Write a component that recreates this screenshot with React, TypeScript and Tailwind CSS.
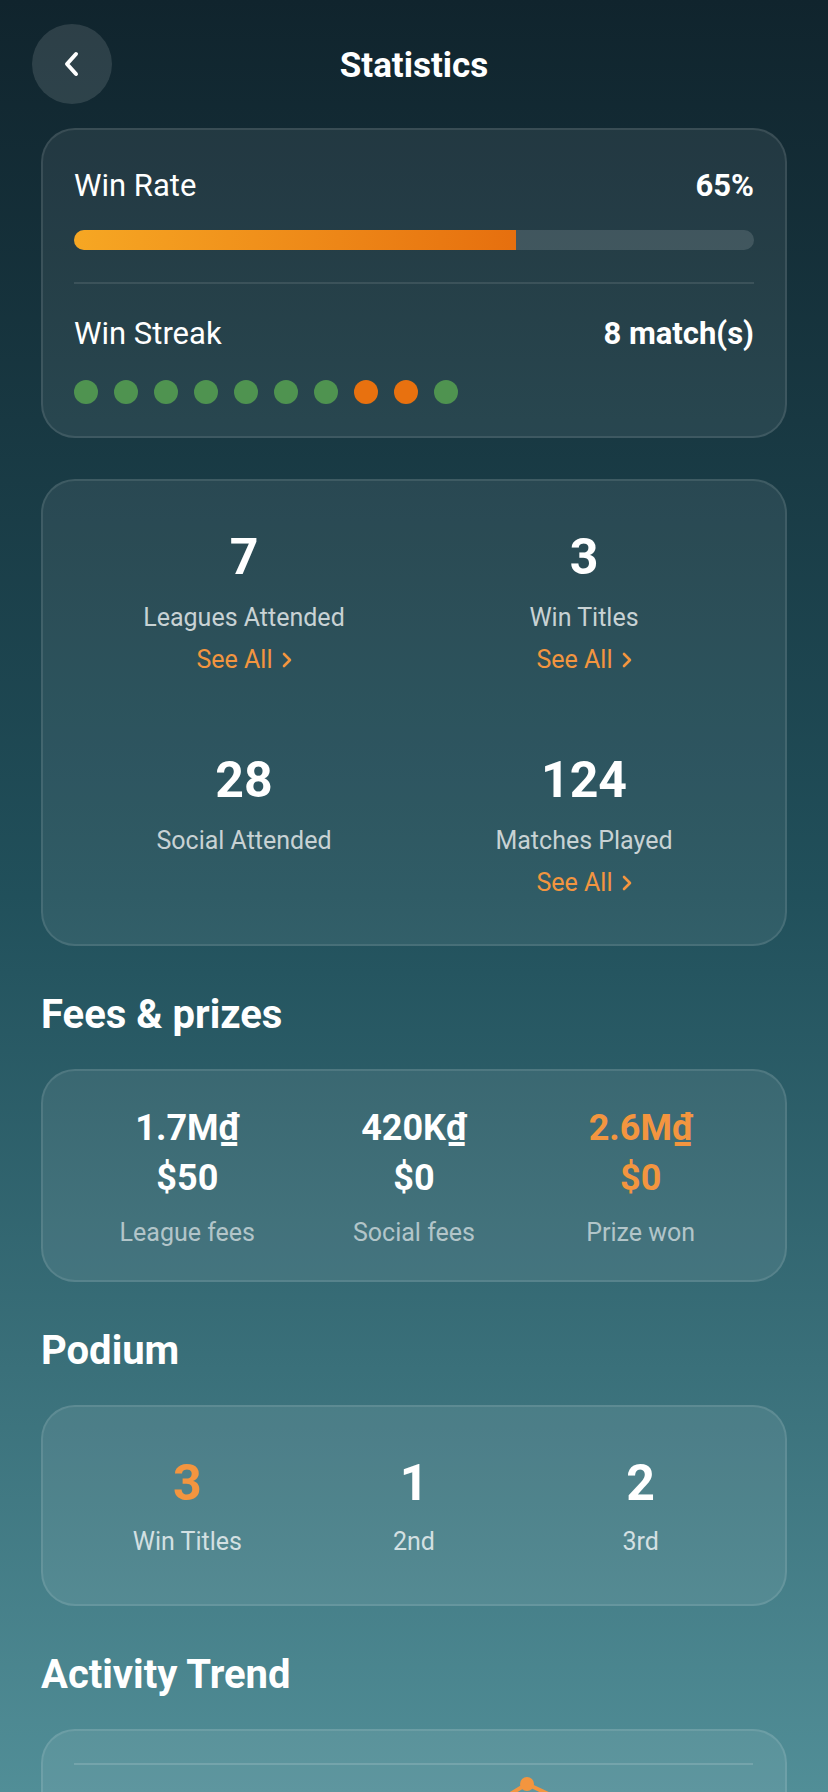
import React from 'react';

const streak = ['w', 'w', 'w', 'w', 'w', 'w', 'w', 'l', 'l', 'w'];

const SeeAll = () => (
  <button className="mt-3 flex items-center gap-[9px] text-[25px] leading-[30px] text-[#f3953f]">
    See All
    <svg width="10" height="16" viewBox="0 0 10 16" fill="none">
      <polyline points="2,2 8,8 2,14" stroke="#f3953f" strokeWidth="2.6" strokeLinecap="round" strokeLinejoin="round" />
    </svg>
  </button>
);

const Stat = ({ value, label, link }: { value: string; label: string; link?: boolean }) => (
  <div className="flex flex-col items-center">
    <div className="text-[50px] font-bold leading-[60px] text-white">{value}</div>
    <div className="mt-4 text-[25px] leading-[30px] text-[#c8d2d4]">{label}</div>
    {link && <SeeAll />}
  </div>
);

const Money = ({ top, bottom, label, accent }: { top: string; bottom: string; label: string; accent?: boolean }) => (
  <div className="flex flex-col items-center">
    <div className={`text-[36px] font-bold leading-[41px] ${accent ? 'text-[#f3953f]' : 'text-white'}`}>{top}</div>
    <div className={`mt-[9px] text-[36px] font-bold leading-[41px] ${accent ? 'text-[#f3953f]' : 'text-white'}`}>{bottom}</div>
    <div className="mt-[19px] text-[25px] leading-[30px] text-white/60">{label}</div>
  </div>
);

const Podium = ({ value, label, accent }: { value: string; label: string; accent?: boolean }) => (
  <div className="flex flex-col items-center">
    <div className={`text-[50px] font-bold leading-[60px] ${accent ? 'text-[#f3953f]' : 'text-white'}`}>{value}</div>
    <div className="mt-[14px] text-[25px] leading-[30px] text-white/75">{label}</div>
  </div>
);

export default function App() {
  return (
    <div
      className="h-[1792px] w-[828px] overflow-hidden bg-gradient-to-b from-[#10242d] via-[#21505b] to-[#518e97]"
      style={{ fontFamily: 'Roboto, "Noto Sans", sans-serif' }}
    >
      {/* Header */}
      <div className="grid grid-cols-[80px_1fr_80px] items-center px-[32px] pt-[24px]">
        <button className="flex h-[80px] w-[80px] items-center justify-center rounded-full bg-white/[0.12]">
          <svg width="16" height="26" viewBox="0 0 16 26" fill="none">
            <polyline points="12,3 3,13 12,23" stroke="white" strokeWidth="4" strokeLinecap="round" strokeLinejoin="round" />
          </svg>
        </button>
        <h1 className="mt-[4px] text-center text-[35px] font-bold text-white">Statistics</h1>
        <div />
      </div>

      <div className="px-[41px]">
        {/* Win rate / streak */}
        <div className="mt-6 rounded-[34px] border-2 border-white/10 bg-white/[0.07] px-[31px] pb-[32px] pt-[38px]">
          <div className="flex items-center justify-between text-[31px] leading-[36px] text-white">
            <span>Win Rate</span>
            <span className="font-bold">65%</span>
          </div>
          <div className="mt-[26px] h-[20px] overflow-hidden rounded-full bg-white/[0.13]">
            <div className="h-full w-[65%] bg-gradient-to-r from-[#f6a723] to-[#e66f0e]" />
          </div>
          <div className="mt-[32px] h-[2px] bg-white/10" />
          <div className="mt-[32px] flex items-center justify-between text-[31px] leading-[36px] text-white">
            <span>Win Streak</span>
            <span className="font-bold">8 match(s)</span>
          </div>
          <div className="mt-[28px] flex gap-4">
            {streak.map((s, i) => (
              <div key={i} className={`h-[24px] w-[24px] rounded-full ${s === 'w' ? 'bg-[#4f9350]' : 'bg-[#e8710f]'}`} />
            ))}
          </div>
        </div>

        {/* Counts */}
        <div className="mt-[41px] grid grid-cols-2 gap-y-[75px] rounded-[34px] border-2 border-white/10 bg-white/[0.07] px-[31px] pb-[46px] pt-[46px]">
          <Stat value="7" label="Leagues Attended" link />
          <Stat value="3" label="Win Titles" link />
          <Stat value="28" label="Social Attended" />
          <Stat value="124" label="Matches Played" link />
        </div>

        {/* Fees & prizes */}
        <h2 className="mt-[46px] text-[40px] font-bold leading-[46px] text-white">Fees &amp; prizes</h2>
        <div className="mt-[31px] grid grid-cols-3 rounded-[34px] border-2 border-white/10 bg-white/[0.08] px-[31px] pb-[32px] pt-[37px]">
          <Money top="1.7M₫" bottom="$50" label="League fees" />
          <Money top="420K₫" bottom="$0" label="Social fees" />
          <Money top="2.6M₫" bottom="$0" label="Prize won" accent />
        </div>

        {/* Podium */}
        <h2 className="mt-[46px] text-[40px] font-bold leading-[46px] text-white">Podium</h2>
        <div className="mt-[31px] grid grid-cols-3 rounded-[34px] border-2 border-white/10 bg-white/[0.08] px-[31px] pb-[47px] pt-[46px]">
          <Podium value="3" label="Win Titles" accent />
          <Podium value="1" label="2nd" />
          <Podium value="2" label="3rd" />
        </div>

        {/* Activity trend */}
        <h2 className="mt-[46px] text-[40px] font-bold leading-[46px] text-white">Activity Trend</h2>
        <div className="mt-[31px] rounded-[34px] border-2 border-white/10 bg-white/[0.08] px-[31px] pb-[32px] pt-[32px]">
          <svg width="679" height="300" viewBox="0 0 679 300" fill="none">
            <line x1="0" y1="1" x2="679" y2="1" stroke="white" strokeOpacity="0.15" strokeWidth="2" />
            <line x1="0" y1="100" x2="679" y2="100" stroke="white" strokeOpacity="0.15" strokeWidth="2" />
            <line x1="0" y1="200" x2="679" y2="200" stroke="white" strokeOpacity="0.15" strokeWidth="2" />
            <polyline
              points="20,230 113,190 226,150 340,89 453,21 566,74 660,140"
              stroke="#f3953f"
              strokeWidth="4"
              strokeLinejoin="round"
              strokeLinecap="round"
            />
            {[[20, 230], [113, 190], [226, 150], [340, 89], [453, 21], [566, 74], [660, 140]].map(([x, y], i) => (
              <circle key={i} cx={x} cy={y} r="7" fill="#f3953f" />
            ))}
          </svg>
        </div>
      </div>
    </div>
  );
}
